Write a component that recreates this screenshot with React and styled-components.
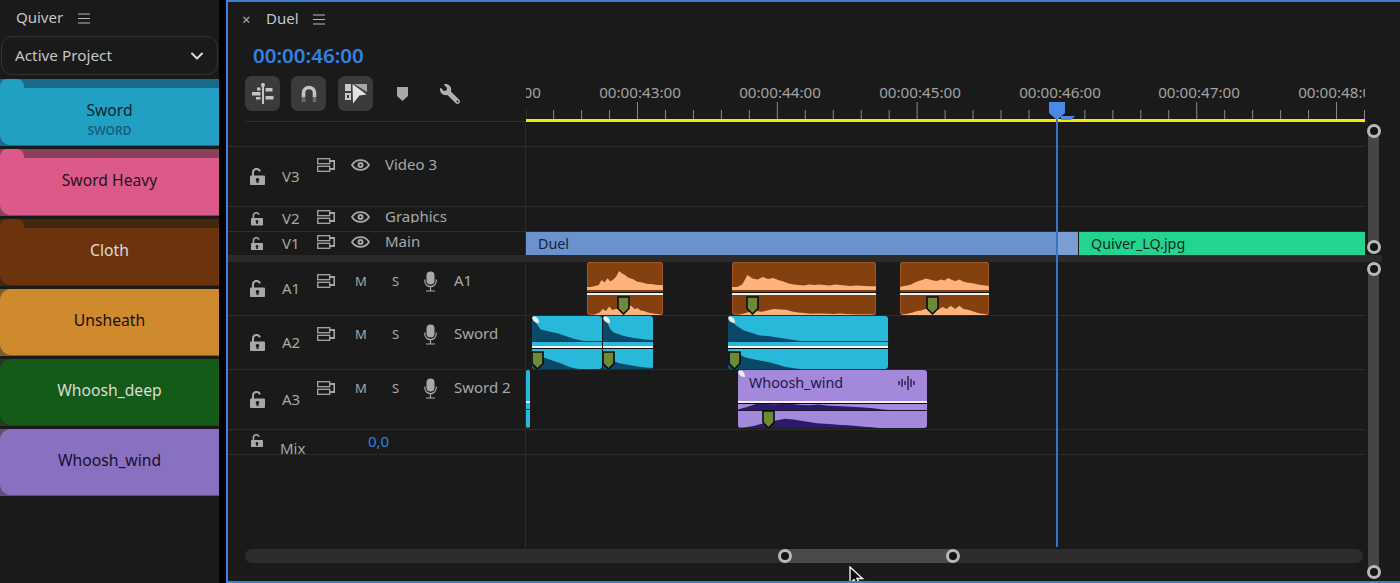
import styled, { createGlobalStyle } from 'styled-components';
import { ChevronDown } from 'lucide-react';
import { FaWrench } from 'react-icons/fa';

const GlobalStyle = createGlobalStyle`
  html, body {
    margin: 0;
    height: 100%;
    background: #000;
    font-family: "Noto Sans", "Open Sans", sans-serif;
    overflow: hidden;
  }
`;

const Page = styled.div`
  display: flex;
  width: 1400px;
  height: 583px;
  gap: 7px;
`;

/* quiver side panel */
const Sidebar = styled.aside`
  width: 219px;
  flex: none;
  background: #1a1a1a;
  display: flex;
  flex-direction: column;
`;
const SideHeader = styled.div`
  height: 36px;
  display: flex;
  align-items: center;
  gap: 15px;
  padding-left: 16px;
  font-size: 15px;
  color: #c6c6c6;
`;
const RaisedText = styled.span`
  margin-top: -2px;
`;
const ProjectSelect = styled.div`
  height: 37px;
  margin: 0 1px 4px;
  padding: 0 10px 0 13px;
  display: flex;
  align-items: center;
  justify-content: space-between;
  border: 1px solid #333;
  border-radius: 11px;
  font-size: 15.300px;
  color: #c6c6c6;
`;
const CardList = styled.div`
  display: flex;
  flex-direction: column;
  gap: 3px;
`;
const Card = styled.div`
  height: 67px;
  display: flex;
  flex-direction: column;
  background: ${(p) => p.$back};
`;
const CardTab = styled.div`
  width: 24px;
  height: 9px;
  flex: none;
  border-radius: 7px 7px 0 0;
  background: ${(p) => p.$front};
`;
const CardBody = styled.div`
  flex: 1;
  margin-bottom: 1px;
  display: flex;
  flex-direction: column;
  align-items: center;
  padding-top: ${(p) => (p.$tab ? 12 : 21)}px;
  background: ${(p) => p.$front};
  color: ${(p) => p.$ink};
  border-radius: ${(p) => (p.$tab ? '0 0 0 10px' : '11px 0 0 11px')};
  font-size: 15.700px;
  line-height: 20px;
`;
const CardSub = styled.div`
  margin-top: 1px;
  font-size: 12px;
  font-weight: 600;
  color: #15607c;
`;

/* timeline panel */
const Panel = styled.main`
  position: relative;
  flex: 1;
  box-sizing: border-box;
  border: 2px solid #3a80d8;
  border-right: 0;
  background: #1a1a1a;
  display: flex;
  flex-direction: column;
  overflow: hidden;
`;
const TabRow = styled.div`
  height: 34px;
  flex: none;
  display: flex;
  align-items: center;
  padding-left: 14px;
  font-size: 15px;
  color: #c6c6c6;
`;
const CloseMark = styled.span`
  width: 24px;
  font-size: 15px;
  color: #b0b0b0;
`;
const TabTitle = styled(RaisedText)`
  width: 47px;
`;
const Timecode = styled.div`
  height: 38px;
  padding-bottom: 2px;
  flex: none;
  display: flex;
  align-items: center;
  padding-left: 25px;
  font-size: 20.500px;
  font-weight: 600;
  color: #3182e0;
`;
const TopRow = styled.div`
  height: 46px;
  flex: none;
  display: flex;
`;
const Toolbar = styled.div`
  width: 280px;
  height: 45px;
  margin-left: 17px;
  border-bottom: 1px solid #2e2e2e;
  display: flex;
  align-items: flex-start;
`;
const ToolButton = styled.div`
  width: 35px;
  height: 35px;
  margin-right: 11px;
  border-radius: 7px;
  background: #3b3b3b;
  display: flex;
  align-items: center;
  justify-content: center;
  &:nth-child(2) {
    margin-right: 12px;
  }
`;
const ToolIcon = styled.div`
  height: 35px;
  margin-left: ${(p) => p.$left}px;
  display: flex;
  align-items: center;
`;
const WrenchIcon = styled(FaWrench)`
  transform: scaleX(-1);
  color: #b0b0b0;
`;
const Ruler = styled.div`
  position: relative;
  width: 839px;
  margin-left: 1px;
  overflow: hidden;
  border-bottom: 3px solid #f5ea00;
  box-sizing: border-box;
`;
const RulerLabel = styled.span`
  position: absolute;
  top: 6px;
  left: ${(p) => p.$x}px;
  transform: translateX(-50%);
  font-size: 15.200px;
  line-height: 20px;
  color: #a2a2a2;
`;
const TickStrip = styled.svg`
  position: absolute;
  left: 0;
  bottom: 0;
  display: block;
`;

const Section = styled.div`
  flex: none;
  display: flex;
`;
const AudioSection = styled(Section)`
  flex: 1;
  min-height: 0;
`;
const TrackColumn = styled.div`
  width: 1137px;
  flex: none;
  display: flex;
  flex-direction: column;
`;
const Track = styled.div`
  height: ${(p) => p.$h}px;
  flex: none;
  display: flex;
  border-bottom: ${(p) => (p.$noLine ? '0' : '1px solid #2c2c2c')};
`;
const FillTrack = styled.div`
  flex: 1;
  display: flex;
`;
const Head = styled.div`
  width: 275px;
  flex: none;
  padding-left: 22px;
  display: flex;
  align-items: center;
  font-size: 15px;
  line-height: 20px;
  color: #a8a8a8;
`;
const EmptyHead = styled.div`
  width: 297px;
  flex: none;
`;
const LockCell = styled.div`
  width: 32px;
  flex: none;
  display: flex;
  padding-left: ${(p) => (p.$small ? 1 : 0)}px;
  box-sizing: border-box;
  margin-top: ${(p) => (p.$mix ? -3 : 0)}px;
`;
const TrackLabel = styled.div`
  width: 35px;
  flex: none;
  margin-top: ${(p) => (p.$mix ? 11 : -2)}px;
  margin-left: ${(p) => (p.$mix ? -2 : 0)}px;
`;
const Controls = styled.div`
  align-self: flex-start;
  padding-top: ${(p) => p.$top}px;
  display: flex;
  align-items: center;
  height: 20px;
`;
const ControlCell = styled.div`
  width: ${(p) => p.$w}px;
  height: 20px;
  flex: none;
  display: flex;
  align-items: center;
  font-size: ${(p) => (p.$letter ? 13 : 14)}px;
`;
const TrackName = styled.div`
  white-space: nowrap;
  align-self: flex-start;
  margin-top: -1px;
  height: ${(p) => (p.$clipped ? 17 : 20)}px;
  overflow: hidden;
`;
const MixValue = styled.div`
  margin-left: 53px;
  margin-top: -2px;
  color: #3182e0;
`;
const Lane = styled.div`
  position: relative;
  flex: 1;
  border-left: 1px solid #2c2c2c;
`;

const Clip = styled.div`
  position: absolute;
  left: ${(p) => p.$x}px;
  top: ${(p) => p.$y ?? 0}px;
  width: ${(p) => p.$w}px;
  height: ${(p) => p.$h}px;
  box-sizing: border-box;
  display: flex;
  flex-direction: column;
  overflow: hidden;
  border-radius: 3px;
  background: ${(p) => p.$bg};
  box-shadow: ${(p) => (p.$edge ? `inset 0 0 0 1px ${p.$edge}` : 'none')};
`;
const VideoClip = styled.div`
  position: absolute;
  left: ${(p) => p.$x}px;
  top: 0;
  bottom: 0;
  width: ${(p) => p.$w}px;
  padding-left: 12px;
  box-sizing: border-box;
  background: ${(p) => p.$bg};
  color: ${(p) => p.$ink};
  font-size: 14.300px;
  line-height: 23px;
  overflow: hidden;
`;
const VideoTail = styled.div`
  position: absolute;
  right: 0;
  top: 0;
  bottom: 0;
  width: 21px;
  background: #7c9dd3;
`;
const Channel = styled.div`
  position: relative;
  flex: ${(p) => (p.$h ? 'none' : 1)};
  height: ${(p) => (p.$h ? `${p.$h}px` : 'auto')};
  min-height: 0;
`;
const WaveSvg = styled.svg`
  position: absolute;
  inset: 0;
  width: 100%;
  height: 100%;
  display: block;
`;
const Band = styled.div`
  height: ${(p) => p.$h}px;
  flex: none;
  background: ${(p) => p.$c};
`;
const ClipTitle = styled.div`
  display: flex;
  justify-content: space-between;
  align-items: center;
  height: 26px;
  padding: 0 11px 1px;
  box-sizing: border-box;
  font-size: 14.300px;
  color: #221745;
`;
const Corner = styled.div`
  position: absolute;
  left: ${(p) => p.$x}px;
  top: 0;
  width: 7px;
  height: 7px;
  background: #ececec;
  border-radius: 1px 7px 1px 7px;
`;
const MarkerIcon = styled.svg`
  position: absolute;
  left: ${(p) => p.$x}px;
  top: ${(p) => p.$y}px;
  display: block;
`;

const Gap = styled.div`
  height: 7px;
  flex: none;
  width: 1154px;
  background: #2a2a2a;
`;
const VScroll = styled.div`
  position: relative;
  width: 11px;
  margin-left: 3px;
  margin-top: ${(p) => p.$top}px;
  height: ${(p) => p.$h}px;
  background: #454545;
`;
const Knob = styled.div`
  position: absolute;
  width: 14px;
  height: 14px;
  box-sizing: border-box;
  border: 3px solid #b8b8b8;
  border-radius: 50%;
  background: #141414;
`;
const VKnob = styled(Knob)`
  left: -1.500px;
  ${(p) => (p.$end ? 'bottom: -7px;' : 'top: -7px;')}
`;
const HScrollWrap = styled.div`
  padding: 0 2px 18px 17px;
  flex: none;
`;
const HScroll = styled.div`
  position: relative;
  height: 14px;
  border-radius: 7px;
  background: #2d2d2d;
`;
const HThumb = styled.div`
  position: absolute;
  left: 540px;
  width: 168px;
  top: 0;
  bottom: 0;
  background: #4a4a4a;
`;
const HKnob = styled(Knob)`
  top: 0;
  ${(p) => (p.$end ? 'right: -7px;' : 'left: -7px;')}
`;
const Playhead = styled.div`
  position: absolute;
  left: 828px;
  top: 100px;
  width: 2px;
  height: 445px;
  background: #3c72c0;
`;
const PlayheadCap = styled.svg`
  position: absolute;
  left: -7px;
  top: 0;
  display: block;
`;
const Cursor = styled.svg`
  position: absolute;
  left: 621px;
  top: 564px;
  display: block;
`;

const BurgerIcon = () => (
  <svg width="12" height="11" viewBox="0 0 12 11">
    <path d="M0 1h12M0 5.500h12M0 10h12" stroke="#b8b8b8" strokeWidth="1.200" />
  </svg>
);

const LockIcon = ({ small }) => {
  const s = small ? 0.8 : 1;
  return (
    <svg width={15 * s} height={17 * s} viewBox="0 0 15 17">
      <path d="M3 8V4.600a3.600 3.600 0 0 1 7-1.200" fill="none" stroke="#a8a8a8" strokeWidth="2" />
      <path
        fillRule="evenodd"
        fill="#a8a8a8"
        d="M1 7.500h13a1 1 0 0 1 1 1V16a1 1 0 0 1-1 1H1a1 1 0 0 1-1-1V8.500a1 1 0 0 1 1-1zM7.500 10a1.700 1.700 0 0 0-1 3.100V15h2v-1.900a1.700 1.700 0 0 0-1-3.100z"
      />
    </svg>
  );
};

const TargetIcon = () => (
  <svg width="18" height="14" viewBox="0 0 18 14" fill="none" stroke="#a8a8a8" strokeWidth="1.300">
    <rect x="0.700" y="0.700" width="12" height="5" />
    <rect x="0.700" y="8.300" width="12" height="5" />
    <path d="M12.700 3h4.600v8h-4.600" strokeWidth="1.800" />
  </svg>
);

const EyeIcon = () => (
  <svg width="19" height="12" viewBox="0 0 19 12">
    <path d="M1 6c4-6.500 13-6.500 17 0-4 6.500-13 6.500-17 0z" fill="none" stroke="#a8a8a8" strokeWidth="1.800" />
    <circle cx="9.500" cy="6" r="3" fill="#a8a8a8" />
    <circle cx="9.500" cy="6" r="1" fill="#1a1a1a" />
  </svg>
);

const MicIcon = () => (
  <svg width="13" height="21" viewBox="0 0 13 21" fill="none" stroke="#a8a8a8" strokeWidth="1.200">
    <rect x="2.500" y="0.500" width="8" height="13" rx="4" fill="#a8a8a8" stroke="none" />
    <path d="M0.800 8.500v1.500a5.700 5.700 0 0 0 11.400 0V8.500M6.500 15.700v3.800M2 20h9" />
  </svg>
);

const WaveIcon = () => (
  <svg width="18" height="14" viewBox="0 0 18 14" stroke="#1b1138" strokeWidth="1.300">
    <path d="M1 5v4M4 3v8M7 5v4M10 0v14M13 3v8M16 5v4" />
  </svg>
);

const wavePoints = (levels) => {
  const n = levels.length - 1;
  const tops = levels.map((v, i) => `${(i / n) * 100},${100 - v * 100}`).join(' ');
  return `0,100 ${tops} 100,100`;
};

const Wave = ({ levels, color }) => (
  <WaveSvg viewBox="0 0 100 100" preserveAspectRatio="none">
    <polygon points={wavePoints(levels)} fill={color} />
  </WaveSvg>
);

const Marker = ({ x, y }) => (
  <MarkerIcon $x={x} $y={y} width="13" height="19" viewBox="0 0 13 19">
    <path d="M1 1h11v11.500L6.500 18 1 12.500z" fill="#6d8a37" stroke="#0c0c0c" strokeWidth="1.600" />
  </MarkerIcon>
);

const orange = { bg: '#84400f', wave: '#fdb27b', edge: '#a3582a' };
const cyan = { bg: '#28b9da', wave: '#0a4a68' };
const purple = { bg: '#a488dc', wave: '#2b1a66' };

const OrangeClip = ({ x, w, top, bottom, marker }) => (
  <Clip $x={x} $w={w} $h={53} $bg={orange.bg} $edge={orange.edge}>
    <Channel $h={25}>
      <Wave levels={top} color={orange.wave} />
    </Channel>
    <Band $h={2.500} $c={orange.wave} />
    <Band $h={2.500} $c={orange.bg} />
    <Band $h={1} $c="#111" />
    <Band $h={2} $c="#f3efe9" />
    <Channel>
      <Wave levels={bottom} color={orange.wave} />
    </Channel>
    <Marker x={marker} y={34} />
  </Clip>
);

const CyanClip = ({ x, w, top, bottom, marker }) => (
  <Clip $x={x} $w={w} $h={52.500} $bg={cyan.bg}>
    <Channel $h={25}>
      <Wave levels={top} color={cyan.wave} />
    </Channel>
    <Band $h={1} $c="#0b4257" />
    <Band $h={4} $c={cyan.bg} />
    <Band $h={1.500} $c="#f2f6f8" />
    <Band $h={1} $c="#0c0c0c" />
    <Channel>
      <Wave levels={bottom} color={cyan.wave} />
    </Channel>
    <Marker x={marker} y={35} />
    <Corner $x={0} />
  </Clip>
);

const audioTracks = [
  {
    id: 'A1',
    name: 'A1',
    h: 53,
    top: 9,
    clips: (
      <>
        <OrangeClip
          x={61}
          w={76}
          marker={30}
          top={[0, 0, 0.02, 0.05, 0.08, 0.28, 0.18, 0.35, 0.22, 0.3, 0.42, 0.64, 0.54, 0.48, 0.38, 0.34, 0.3, 0.22, 0.2, 0.18, 0.14, 0.12, 0.12, 0.1, 0.08, 0.08, 0.06]}
          bottom={[0, 0, 0, 0.06, 0.12, 0.3, 0.2, 0.42, 0.25, 0.3, 0.3, 0.4, 0.4, 0.5, 0.45, 0.3, 0.34, 0.22, 0.2, 0.14, 0.1, 0.08, 0.05, 0.02, 0]}
        />
        <OrangeClip
          x={206}
          w={144}
          marker={14}
          top={[0, 0, 0.1, 0.48, 0.34, 0.3, 0.4, 0.32, 0.36, 0.28, 0.22, 0.14, 0.1, 0.08, 0.06, 0.1, 0.08, 0.1, 0.08, 0.06, 0.1, 0.08, 0.06, 0.04, 0.06, 0.05, 0.04, 0.03, 0.03]}
          bottom={[0, 0, 0.08, 0.16, 0.2, 0.16, 0.24, 0.3, 0.28, 0.26, 0.18, 0.12, 0.1, 0.06, 0.08, 0.07, 0.06, 0.05, 0.07, 0.05, 0.04, 0.03, 0.03, 0.02, 0]}
        />
        <OrangeClip
          x={374}
          w={89}
          marker={26}
          top={[0, 0.04, 0.06, 0.1, 0.18, 0.24, 0.28, 0.34, 0.3, 0.26, 0.24, 0.3, 0.26, 0.36, 0.28, 0.24, 0.3, 0.22, 0.18, 0.16, 0.14, 0.1, 0.08, 0.06, 0.04]}
          bottom={[0, 0.04, 0.08, 0.12, 0.2, 0.22, 0.3, 0.34, 0.3, 0.26, 0.4, 0.3, 0.46, 0.3, 0.46, 0.3, 0.26, 0.2, 0.12, 0.08, 0.05, 0]}
        />
      </>
    ),
  },
  {
    id: 'A2',
    name: 'Sword',
    h: 53,
    top: 8,
    clips: (
      <>
        <CyanClip
          x={6}
          w={70}
          marker={-1}
          top={[0.95, 0.7, 0.46, 0.42, 0.38, 0.34, 0.3, 0.24, 0.18, 0.12, 0.07, 0.03, 0, 0, 0, 0, 0]}
          bottom={[0.9, 0.8, 0.62, 0.55, 0.48, 0.4, 0.33, 0.25, 0.15, 0.08, 0.03, 0, 0, 0, 0, 0, 0]}
        />
        <CyanClip
          x={77}
          w={50}
          marker={-1}
          top={[0.95, 0.75, 0.45, 0.32, 0.28, 0.22, 0.18, 0.15, 0.12, 0.1, 0.08, 0.06, 0.05, 0.04]}
          bottom={[0.9, 0.7, 0.5, 0.38, 0.3, 0.26, 0.22, 0.19, 0.16, 0.13, 0.1, 0.08, 0.06, 0.05]}
        />
        <CyanClip
          x={202}
          w={160}
          marker={0}
          top={[0.95, 0.62, 0.42, 0.32, 0.22, 0.2, 0.15, 0.1, 0.05, 0, 0, 0, 0, 0, 0, 0, 0, 0, 0, 0, 0]}
          bottom={[0.9, 0.85, 0.6, 0.5, 0.42, 0.35, 0.25, 0.12, 0.05, 0, 0, 0, 0, 0, 0, 0, 0, 0, 0, 0, 0]}
        />
      </>
    ),
  },
  {
    id: 'A3',
    name: 'Sword 2',
    h: 59,
    top: 8,
    clips: (
      <>
        <Clip $x={0} $w={4} $h={58} $bg={cyan.bg}>
          <Channel $h={31} />
          <Band $h={1.500} $c="#f2f6f8" />
          <Band $h={6.500} $c={cyan.bg} />
          <Band $h={1} $c="#0b4257" />
        </Clip>
        <Clip $x={212} $w={189} $h={58} $bg={purple.bg}>
          <ClipTitle>
            Whoosh_wind
            <WaveIcon />
          </ClipTitle>
          <Channel $h={5} />
          <Band $h={2} $c="#f4f2fa" />
          <Band $h={1} $c="#0c0c0c" />
          <Channel $h={6}>
            <Wave levels={[0.1, 0.5, 1, 1, 0.95, 1, 1, 0.85, 0.8, 0.9, 0.7, 0.65, 0.6, 0.5, 0.4, 0.3, 0.1, 0, 0, 0, 0, 0]} color={purple.wave} />
          </Channel>
          <Band $h={1} $c="#1d1338" />
          <Channel>
            <Wave levels={[0, 0.05, 0.12, 0.25, 0.32, 0.45, 0.55, 0.5, 0.42, 0.36, 0.28, 0.25, 0.22, 0.18, 0.16, 0.12, 0.08, 0.04, 0, 0, 0, 0, 0, 0, 0]} color={purple.wave} />
          </Channel>
          <Marker x={24} y={40} />
          <Corner $x={0} />
        </Clip>
      </>
    ),
  },
];

const folders = [
  { label: 'Sword', sub: 'SWORD', front: '#22a0c4', back: '#1a6b88', ink: '#0e2530', tab: true },
  { label: 'Sword Heavy', front: '#db5a89', back: '#8a3f5c', ink: '#2c1020', tab: true },
  { label: 'Cloth', front: '#6c330e', back: '#45260f', ink: '#dcdcdc', tab: true },
  { label: 'Unsheath', front: '#ce8a2c', back: '#7d5a2c', ink: '#1c1008' },
  { label: 'Whoosh_deep', front: '#145a18', back: '#1d3f1f', ink: '#dcdcdc' },
  { label: 'Whoosh_wind', front: '#8a70c0', back: '#5f5277', ink: '#150f2b' },
];

const rulerLabels = [
  ['00:00:42:00', -26],
  ['00:00:43:00', 114],
  ['00:00:44:00', 254],
  ['00:00:45:00', 394],
  ['00:00:46:00', 534],
  ['00:00:47:00', 673],
  ['00:00:48:00', 813],
];

const ticks = Array.from({ length: 31 }, (_, i) => -0.3 + i * 27.96);

const SwordCard = ({ folder }) => (
  <Card $back={folder.back}>
    {folder.tab && <CardTab $front={folder.front} />}
    <CardBody $front={folder.front} $ink={folder.ink} $tab={folder.tab}>
      {folder.label}
      {folder.sub && <CardSub>{folder.sub}</CardSub>}
    </CardBody>
  </Card>
);

const VideoHead = ({ label, name, top, small, clipped }) => (
  <Head>
    <LockCell $small={small}>
      <LockIcon small={small} />
    </LockCell>
    <TrackLabel>{label}</TrackLabel>
    <Controls $top={top}>
      <ControlCell $w={34}>
        <TargetIcon />
      </ControlCell>
      <ControlCell $w={34}>
        <EyeIcon />
      </ControlCell>
      <TrackName $clipped={clipped}>{name}</TrackName>
    </Controls>
  </Head>
);

const AudioHead = ({ label, name, top }) => (
  <Head>
    <LockCell>
      <LockIcon />
    </LockCell>
    <TrackLabel>{label}</TrackLabel>
    <Controls $top={top}>
      <ControlCell $w={38}>
        <TargetIcon />
      </ControlCell>
      <ControlCell $w={37} $letter>
        M
      </ControlCell>
      <ControlCell $w={32} $letter>
        S
      </ControlCell>
      <ControlCell $w={30}>
        <MicIcon />
      </ControlCell>
      <TrackName>{name}</TrackName>
    </Controls>
  </Head>
);

const App = () => {
  return (
    <Page>
      <GlobalStyle />
      <Sidebar>
        <SideHeader>
          <RaisedText>Quiver</RaisedText>
          <BurgerIcon />
        </SideHeader>
        <ProjectSelect>
          <RaisedText>Active Project</RaisedText>
          <ChevronDown size={20} color="#dcdcdc" strokeWidth={2.4} />
        </ProjectSelect>
        <CardList>
          {folders.map((f) => (
            <SwordCard key={f.label} folder={f} />
          ))}
        </CardList>
      </Sidebar>

      <Panel>
        <TabRow>
          <CloseMark>×</CloseMark>
          <TabTitle>Duel</TabTitle>
          <BurgerIcon />
        </TabRow>
        <Timecode>00:00:46:00</Timecode>
        <TopRow>
          <Toolbar>
            <ToolButton>
              <svg width="22" height="21" viewBox="0 0 22 21" fill="#c4c4c4">
                <rect x="10" y="0" width="2" height="21" />
                <circle cx="11" cy="2" r="2" />
                <rect x="13.500" y="5" width="7" height="3.500" />
                <rect x="0" y="9" width="8.500" height="3.500" />
                <rect x="13.500" y="13" width="8" height="3.500" />
                <rect x="5" y="4.500" width="3.500" height="3" />
                <rect x="4" y="14" width="4.500" height="2.500" />
              </svg>
            </ToolButton>
            <ToolButton>
              <svg width="16" height="17" viewBox="0 0 16 17" fill="none">
                <path d="M2.500 12V8a5.500 5.500 0 0 1 11 0v4" stroke="#c4c4c4" strokeWidth="3.600" />
                <path d="M2.500 12v5M13.500 12v5" stroke="#6c6c6c" strokeWidth="3.600" />
              </svg>
            </ToolButton>
            <ToolButton>
              <svg width="22" height="20" viewBox="0 0 22 20" fill="#c8c8c8">
                <rect x="0" y="0" width="6" height="7" />
                <path d="M0 9h6v7H0zM2 11v3h2v-3z" fillRule="evenodd" />
                <path d="M9 0h13v8z" fill="#a6a6a6" />
                <path d="M7.500 0L21.500 10.500 14.500 11.500 8 19.500z" fill="#e2e2e2" />
              </svg>
            </ToolButton>
            <ToolIcon $left={13}>
              <svg width="11" height="14" viewBox="0 0 11 14">
                <path d="M0 0h11v9l-5.500 5L0 9z" fill="#a8a8a8" />
              </svg>
            </ToolIcon>
            <ToolIcon $left={32}>
              <WrenchIcon size={20} />
            </ToolIcon>
          </Toolbar>
          <Ruler>
            {rulerLabels.map(([text, x]) => (
              <RulerLabel key={text} $x={x}>
                {text}
              </RulerLabel>
            ))}
            <TickStrip width="839" height="18" viewBox="0 0 839 18" stroke="#8b8b8b">
              {ticks.map((x, i) => (
                <line key={x} x1={x} x2={x} y1={i % 5 === 4 ? 1 : 9} y2={18} />
              ))}
            </TickStrip>
          </Ruler>
        </TopRow>

        <Section>
          <TrackColumn>
            <Track $h={24}>
              <EmptyHead />
              <Lane />
            </Track>
            <Track $h={59}>
              <VideoHead label="V3" name="Video 3" top={8} />
              <Lane />
            </Track>
            <Track $h={24}>
              <VideoHead label="V2" name="Graphics" top={0} small clipped />
              <Lane />
            </Track>
            <Track $h={23} $noLine>
              <VideoHead label="V1" name="Main" top={0} small />
              <Lane>
                <VideoClip $x={0} $w={552} $bg="#6a92cf" $ink="#15233a">
                  Duel
                  <VideoTail />
                </VideoClip>
                <VideoClip $x={553} $w={286} $bg="#22d490" $ink="#0f2a1e">
                  Quiver_LQ.jpg
                </VideoClip>
              </Lane>
            </Track>
          </TrackColumn>
          <VScroll $top={9} $h={116}>
            <VKnob />
            <VKnob $end />
          </VScroll>
        </Section>

        <Gap />

        <AudioSection>
          <TrackColumn>
            {audioTracks.map((t) => (
              <Track key={t.id} $h={t.h}>
                <AudioHead label={t.id} name={t.name} top={t.top} />
                <Lane>{t.clips}</Lane>
              </Track>
            ))}
            <Track $h={24}>
              <Head>
                <LockCell $small $mix>
                  <LockIcon small />
                </LockCell>
                <TrackLabel $mix>Mix</TrackLabel>
                <MixValue>0,0</MixValue>
              </Head>
              <Lane />
            </Track>
            <FillTrack>
              <EmptyHead />
              <Lane />
            </FillTrack>
            <HScrollWrap>
              <HScroll>
                <HThumb>
                  <HKnob />
                  <HKnob $end />
                </HThumb>
              </HScroll>
            </HScrollWrap>
          </TrackColumn>
          <VScroll $top={7} $h={303}>
            <VKnob />
            <VKnob $end />
          </VScroll>
        </AudioSection>

        <Playhead>
          <PlayheadCap width="26" height="19" viewBox="0 0 26 19" fill="#4a8ae6">
            <path d="M0 0h16v11l-8 7-8-7z" />
            <path d="M12 14h14l-4 4h-10z" />
          </PlayheadCap>
        </Playhead>

        <Cursor width="16" height="21" viewBox="0 0 16 21">
          <path d="M1 1v16l4-3.500 3 6 3-1.500-3-5.500h5.500z" fill="#0c0c0c" stroke="#f2f2f2" strokeWidth="1.400" />
        </Cursor>
      </Panel>
    </Page>
  );
};

export default App;
